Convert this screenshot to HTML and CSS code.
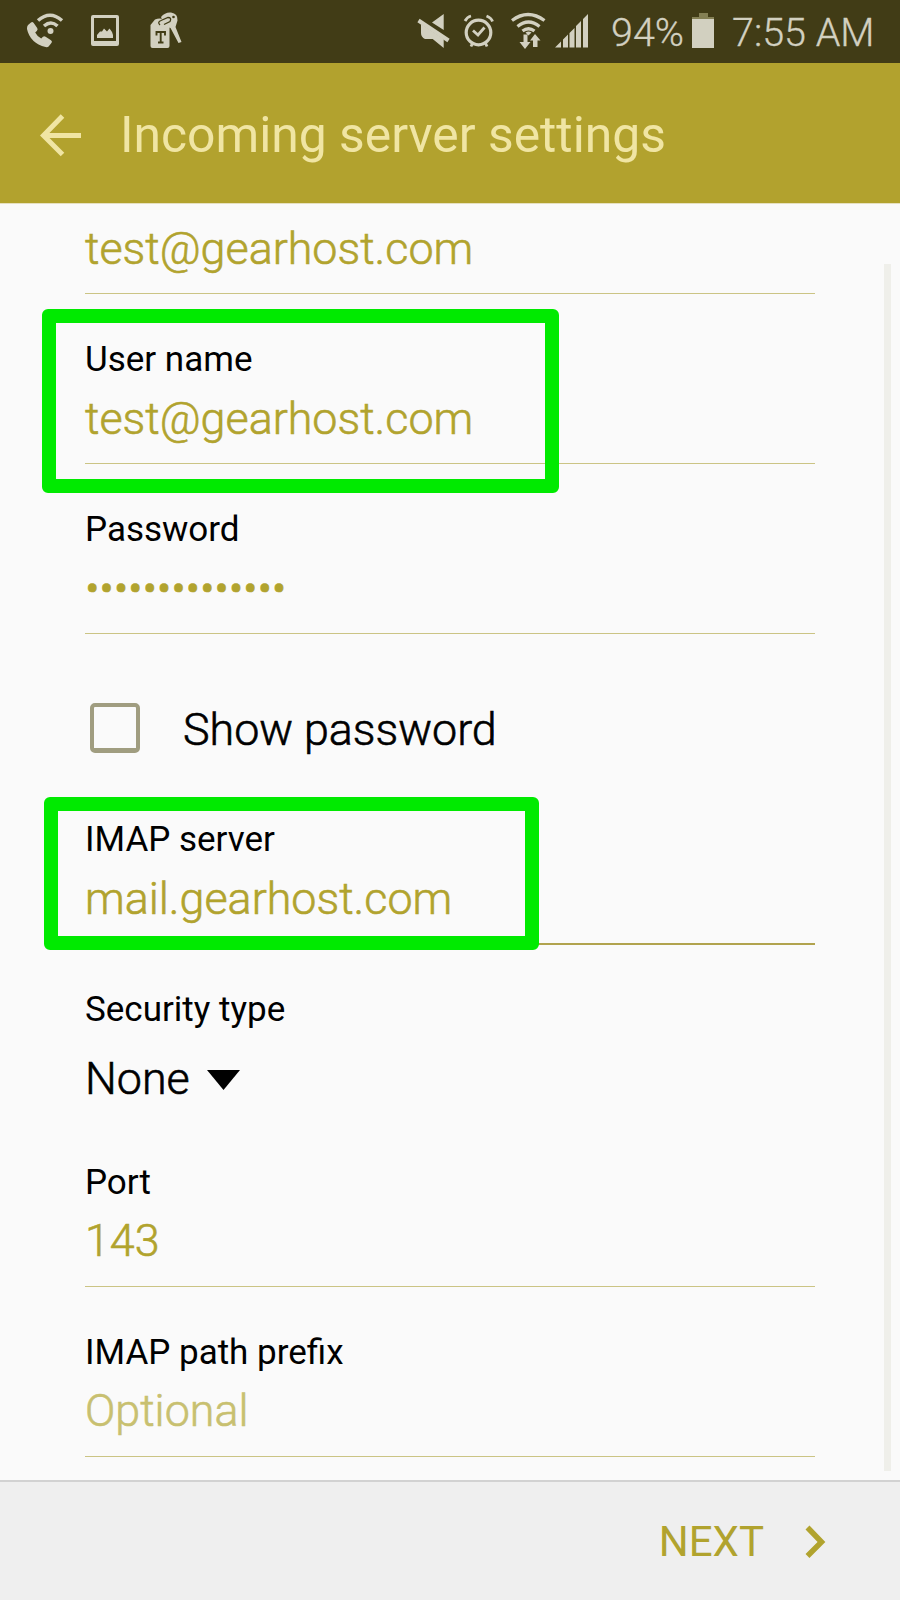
FILE: index.html
```
<!DOCTYPE html>
<html lang="en">
<head>
<meta charset="utf-8">
<title>Incoming server settings</title>
<link rel="stylesheet" href="styles.css">
</head>
<body>
<div class="screen">
  <div class="status">
    <svg class="status-icons" width="200" height="63" viewBox="0 0 200 63" fill="#d2d0c0">
      <!-- wifi call -->
      <path d="M28 25l3-2.500q1.500-1 2.700.6l3.500 5q1 1.500-.4 2.800l-1.600 1.500q2 4 6 6l1.800-1.600q1.200-1 2.600 0l5.400 3.400q1.600 1 .6 2.600l-3 3.700q-1 1-3 .6Q30 43 27 29q-.2-2.500 1-4z"/>
      <circle cx="50.500" cy="31" r="3"/>
      <path d="M38 20.500Q50 10 62 20.500M44 26Q51 20 57.500 26" fill="none" stroke="#d2d0c0" stroke-width="3.500"/>
      <!-- picture -->
      <path fill-rule="evenodd" d="M93 15h24q2 0 2 2v27q0 2-2 2H93q-2 0-2-2V17q0-2 2-2zm1 3v23h22V18z"/>
      <path d="M97 38v-3l3-3.500h2l2-3 3 3 2.500-3 2.500 3.500 1 3v3z"/>
      <!-- keys -->
      <path d="M161 17q4-5 10-4.500 7 1 6.500 8l-2 6.500 6 15-3 1-8-15-6-2z"/>
      <path d="M155 19.500q5-2 8 0l6.500 6.500V46q0 2-2 2h-15q-2 0-2-2V25z"/>
      <path d="M160 25q-3-3 1-4.500l7-3q4 0 2 4l-6 3" fill="none" stroke="#413c16" stroke-width="1.300"/>
      <circle cx="173.500" cy="17" r="1.300" fill="#413c16"/>
      <path d="M156.500 35.500v-3.500h8.500v3.500M160.700 32v10.500M158 42.500h5.500" fill="none" stroke="#413c16" stroke-width="1.900"/>
    </svg>
    <svg class="status-icons" width="180" height="63" viewBox="412 0 180 63" fill="#d2d0c0">
      <!-- muted speaker -->
      <path d="M443.700 14v16L432 22.500zM421 24l22.700 15v9l-11-9H425q-4-2-4-6z"/>
      <path d="M418.500 20.500l30 20" stroke="#d2d0c0" stroke-width="4"/>
      <!-- alarm -->
      <g fill="none" stroke="#d2d0c0">
        <circle cx="478.500" cy="32.500" r="12.300" stroke-width="3.200"/>
        <path d="M473 30.500l5 4.500 6.500-7.500" stroke-width="2.800"/>
        <path d="M465 21q2-4 6-5M486.500 16q5 2 6 5.500M473 42l-2 4.500M485 42l2 4.500" stroke-width="2.800"/>
        <!-- wifi -->
        <path d="M512 20.500Q528 8.500 544.500 20.500M517.500 26.500Q528.500 17.500 539.500 26.500M522.500 31Q528.500 26.500 534.500 31" stroke-width="3.300"/>
      </g>
      <path d="M525.500 32.500q3-2 6 0l-3 3zM523.500 34.500h4V42h3l-5.500 7-5.500-7h4zM535 34l5.500 6.500h-3V47h-4.500v-6.500h-3z"/>
      <!-- signal -->
      <path d="M555 47.500l6-6v6zM563 39.500l5-5v13h-5zM569.500 33l5-5v19.500h-5zM576 26l5-5v26.500h-5zM583 19l5-5v33.500h-5z"/>
    </svg>
    <span class="percent">94%</span>
    <svg class="battery" width="22" height="63" viewBox="0 0 22 63">
      <path d="M7 13h9v4H7zM0 17h22v2H0z" fill="#848054"/>
      <path d="M0 19h22v29H0z" fill="#d2d0c0"/>
    </svg>
    <span class="clock">7:55 AM</span>
  </div>

  <header class="bar">
    <svg class="back" width="42" height="44" viewBox="0 0 42 44" fill="none" stroke="#f0e5a3" stroke-width="5">
      <path d="M22.500 3L3.500 22.500l19 19M3.500 22.500H41"/>
    </svg>
    <h1 class="title">Incoming server settings</h1>
  </header>

  <main class="form">
    <div class="field field-first"><div class="value">test@gearhost.com</div></div>
    <div class="field">
      <div class="label">User name</div>
      <div class="value">test@gearhost.com</div>
    </div>
    <div class="field">
      <div class="label">Password</div>
      <div class="value dots">••••••••••••••</div>
    </div>
    <div class="show"><span class="box"></span><span class="show-text">Show password</span></div>
    <div class="field focused">
      <div class="label">IMAP server</div>
      <div class="value">mail.gearhost.com</div>
    </div>
    <div class="field security">
      <div class="label">Security type</div>
      <div class="select"><span>None</span><svg width="33" height="20" viewBox="0 0 33 20"><path d="M0 0h33L16.500 20z"/></svg></div>
    </div>
    <div class="field field-low">
      <div class="label">Port</div>
      <div class="value">143</div>
    </div>
    <div class="field field-low">
      <div class="label">IMAP path prefix</div>
      <div class="value hint">Optional</div>
    </div>
    <div class="scrollbar"></div>
    <div class="mark mark-user"></div>
    <div class="mark mark-server"></div>
  </main>

  <footer class="footer">
    <span class="next">NEXT</span>
    <svg class="chevron" width="22" height="34" viewBox="0 0 22 34" fill="none" stroke="#b1a32e" stroke-width="5.500"><path d="M2.500 2.500L16.500 17l-14 14"/></svg>
  </footer>
</div>
</body>
</html>
```
FILE: styles.css
```
* { box-sizing: border-box; }
body { margin: 0; font-family: Roboto, sans-serif; background: #fafafa; }
.screen { width: 900px; height: 1600px; display: flex; flex-direction: column; overflow: hidden; color: #000; }
.screen svg { display: block; flex: none; }
.status { height: 63px; flex: none; background: #413c16; color: #d2d0c0; display: flex; font-size: 39.5px; font-weight: 300; line-height: 66px; white-space: nowrap; -webkit-text-stroke: 0.3px; }
.status-icons + .status-icons { margin-left: 212px; }
.percent { width: 80px; margin-left: 19px; }
.battery { margin-left: 1px; }
.clock { margin-left: 18px; }
.bar { height: 140px; flex: none; background: #b2a22e; display: flex; }
.back { margin: 50px 0 0 40px; }
.title { margin: 0 0 0 38px; color: #f0e5a3; font-size: 49.8px; font-weight: 400; line-height: 144px; white-space: nowrap; }
.form { position: relative; height: 1277px; flex: none; padding: 0 85px; border-top: 1px solid #e6e0c0; }
.field { height: 170px; padding-top: 46px; border-bottom: 1px solid #cbc484; white-space: nowrap; }
.field-first { height: 90px; padding-top: 18px; }
.label { font-size: 35px; line-height: 40px; }
.value, .select, .show-text { font-size: 44.8px; font-weight: 300; line-height: 54px; -webkit-text-stroke: 0.6px; }
.value { margin-top: 12px; color: #b1a32e; }
.dots { letter-spacing: -0.13px; }
.field-first .value { margin-top: 0; }
.field-low .value { margin-top: 11px; }
.hint { color: #c8c070; }
.show { height: 140px; display: flex; padding: 69px 0 0 5px; }
.box { width: 50px; height: 50px; border: 4px solid #a09d80; border-bottom-width: 5px; border-radius: 5px; }
.show-text { margin-left: 43px; white-space: nowrap; }
.focused { height: 171px; border-bottom: 2px solid #b1a34e; }
.security { height: 172px; padding-top: 45px; border: 0; }
.select { margin-top: 22px; display: flex; }
.select svg { margin: 18px 0 0 17px; }
.scrollbar { position: absolute; left: 884px; top: 60px; width: 7px; height: 1207px; background: #efefea; }
.mark { position: absolute; border: 14px solid #00ea00; border-radius: 6px; }
.mark-user { left: 42px; top: 105px; width: 517px; height: 184px; }
.mark-server { left: 44px; top: 593px; width: 495px; height: 153px; }
.footer { height: 120px; background: #efefef; border-top: 2px solid #d2d2d2; display: flex; justify-content: flex-end; padding-right: 73px; }
.next { color: #b1a32e; font-size: 42px; line-height: 120px; }
.chevron { margin: 43px 0 0 41px; }
```
